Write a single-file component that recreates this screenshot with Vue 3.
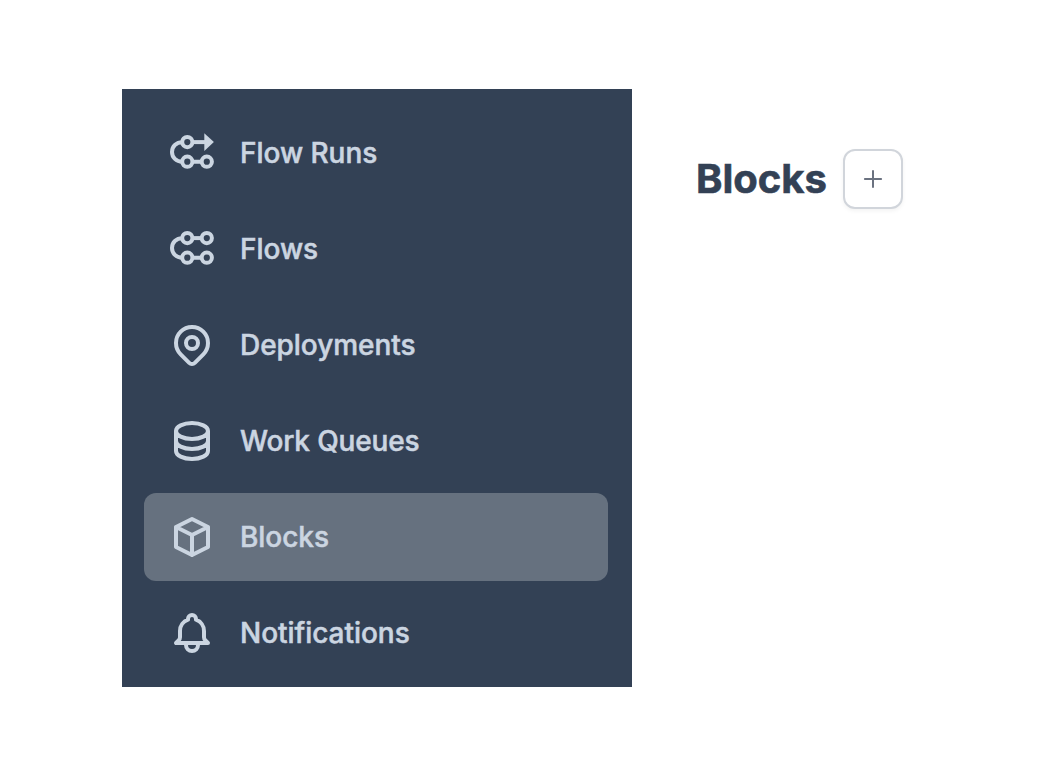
<script setup>
const items = [
  { label: 'Flow Runs', icon: 'runs' },
  { label: 'Flows', icon: 'flows' },
  {
    label: 'Deployments',
    path: 'M17.657 16.657L13.414 20.9a1.998 1.998 0 01-2.827 0l-4.244-4.243a8 8 0 1111.314 0zM15 11a3 3 0 11-6 0 3 3 0 016 0z',
  },
  {
    label: 'Work Queues',
    tight: true,
    path: 'M4 7v10c0 2.21 3.582 4 8 4s8-1.79 8-4V7M4 7c0 2.21 3.582 4 8 4s8-1.79 8-4M4 7c0-2.21 3.582-4 8-4s8 1.79 8 4m0 5c0 2.21-3.582 4-8 4s-8-1.79-8-4',
  },
  {
    label: 'Blocks',
    active: true,
    path: 'M20 7l-8-4-8 4m16 0l-8 4m8-4v10l-8 4m0-10L4 7m8 4v10M4 7v10l8 4',
  },
  {
    label: 'Notifications',
    path: 'M15 17h5l-1.405-1.405A2.032 2.032 0 0118 14.158V11a6.002 6.002 0 00-4-5.659V5a2 2 0 10-4 0v.341C7.67 6.165 6 8.388 6 11v3.159c0 .538-.214 1.055-.595 1.436L4 17h5m6 0v1a3 3 0 11-6 0v-1m6 0H9',
  },
]
</script>

<template>
  <div class="page">
    <nav class="sidebar">
      <a v-for="item in items" :key="item.label" class="item" :class="{ active: item.active }">
        <svg v-if="item.path" class="icon" viewBox="0 0 24 24">
          <path :d="item.path" />
        </svg>
        <svg v-else class="icon flow" viewBox="0 0 48 48">
          <path d="M14.3 13.2C8.2 13.2 4 17.4 4 22.9s4.2 9.8 10.3 9.8M23.6 32.7h10.9" />
          <circle cx="19.3" cy="13.1" r="5.1" />
          <circle cx="19.3" cy="32.7" r="5.1" />
          <circle cx="38.8" cy="32.7" r="5.1" />
          <template v-if="item.icon === 'runs'">
            <path d="M23.6 13.1h13.7" />
            <path class="head" d="M36.3 4.3l9.6 8.8-9.6 8.8z" />
          </template>
          <template v-else>
            <path d="M23.6 13.1h10.9" />
            <circle cx="38.8" cy="13.1" r="5.1" />
          </template>
        </svg>
        <span class="label" :class="{ tight: item.tight }">{{ item.label }}</span>
      </a>
    </nav>
    <header class="heading">
      <h1>Blocks</h1>
      <button class="add" aria-label="Add block">
        <svg class="plus" viewBox="0 0 20 20"><path d="M10 1.9v16.2M1.9 10h16.2" /></svg>
      </button>
    </header>
  </div>
</template>

<style>
body {
  background: #fff;
}
</style>

<style scoped>
.page {
  box-sizing: border-box;
  height: 777px;
  padding: 89px 0 0 122px;
  display: flex;
  align-items: flex-start;
  font-family: Inter, "Liberation Sans", sans-serif;
}
.sidebar {
  box-sizing: border-box;
  width: 510px;
  height: 598px;
  padding: 20px 24px 0 22px;
  display: flex;
  flex-direction: column;
  gap: 8px;
  overflow: hidden;
  background: #334155;
}
.item {
  box-sizing: border-box;
  height: 88px;
  flex: none;
  padding: 0 24px;
  display: flex;
  align-items: center;
  gap: 24px;
  border-radius: 12px;
  color: #cbd5e1;
}
.active {
  background: #66717f;
}
.icon {
  width: 48px;
  height: 48px;
  flex: none;
  fill: none;
  stroke: currentColor;
  stroke-width: 2;
  stroke-linecap: round;
  stroke-linejoin: round;
}
.flow {
  stroke-width: 4;
  stroke-linecap: butt;
}
.head {
  fill: currentColor;
  stroke: none;
}
.label {
  font-size: 28px;
  line-height: 40px;
  font-weight: 500;
  letter-spacing: -0.04px;
  white-space: nowrap;
  -webkit-text-stroke: 0.5px currentColor;
}
.tight {
  letter-spacing: -0.16px;
}
.heading {
  margin: 60px 0 0 64px;
  display: flex;
  align-items: center;
  gap: 16px;
}
h1 {
  margin: 0;
  font-size: 40px;
  line-height: 56px;
  font-weight: 700;
  color: #334155;
  -webkit-text-stroke: 0.6px currentColor;
}
.add {
  box-sizing: border-box;
  width: 60px;
  height: 60px;
  padding: 0;
  display: flex;
  align-items: center;
  justify-content: center;
  border: 2px solid #d1d5db;
  border-radius: 12px;
  background: #fff;
  box-shadow: 0 2px 4px rgba(0, 0, 0, 0.05);
}
.plus {
  width: 20px;
  height: 20px;
  fill: none;
  stroke: #6b7280;
  stroke-width: 2;
  stroke-linecap: round;
}
</style>
